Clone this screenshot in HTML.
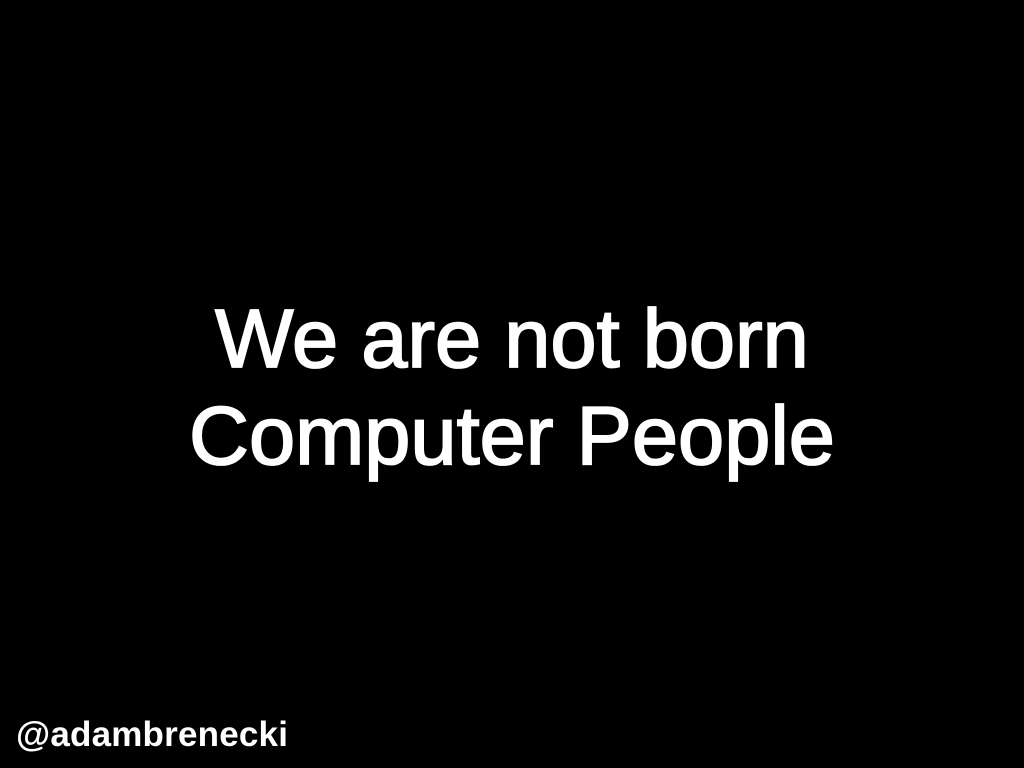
<!DOCTYPE html>
<html><head><style>
html,body{margin:0;padding:0;background:#000;width:1024px;height:768px;overflow:hidden}
.t{position:absolute;left:0;width:1024px;text-align:center;color:#fff;font-family:"Liberation Sans",sans-serif;font-size:83px;line-height:83px;white-space:nowrap;-webkit-text-stroke:1.8px #fff}
.h{position:absolute;left:16px;top:717px;color:#fff;font-family:"Liberation Sans",sans-serif;font-weight:bold;font-size:35px;line-height:35px;white-space:nowrap;letter-spacing:0.2px}
</style></head><body>
<div class="t" style="top:297px">We are not born</div>
<div class="t" style="top:394px">Computer People</div>
<div class="h">@adambrenecki</div>
</body></html>
